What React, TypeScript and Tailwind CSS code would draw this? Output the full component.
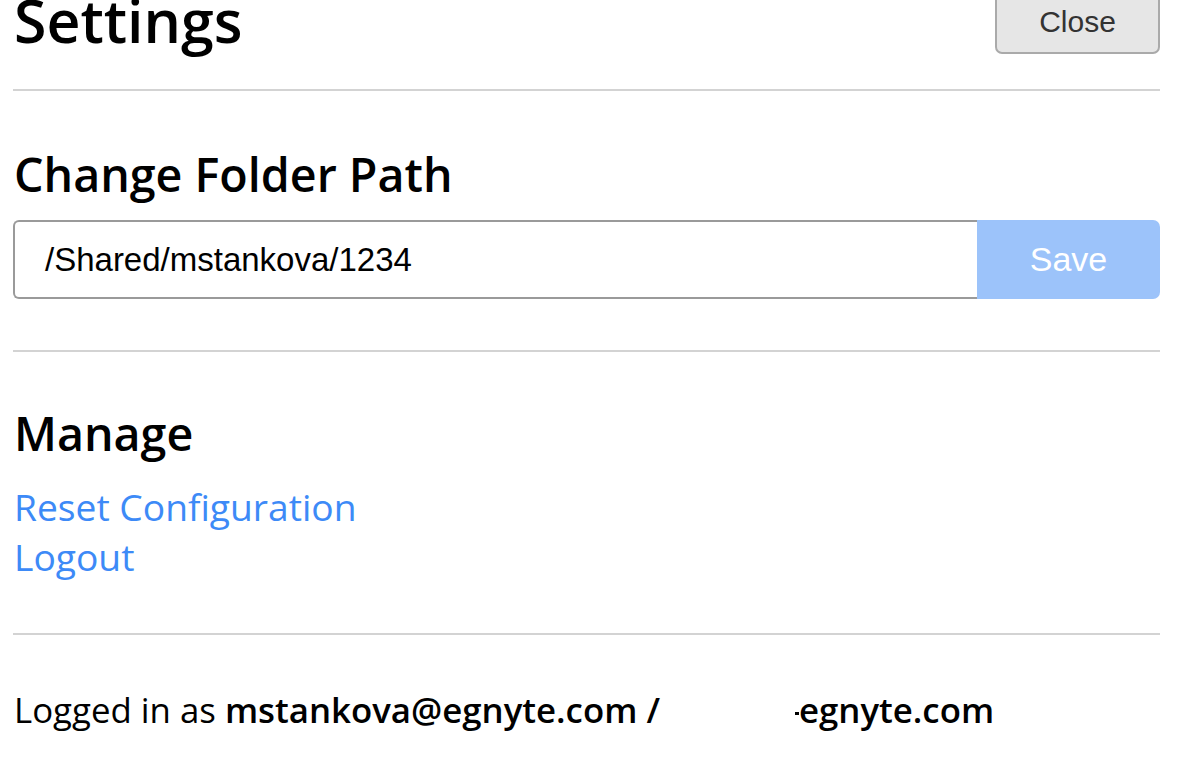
import React from "react";

export default function App() {
  const os = { fontFamily: '"Open Sans", "Noto Sans", sans-serif' };
  const ar = { fontFamily: '"Liberation Sans", Arial, sans-serif' };
  return (
    <div className="w-[1198px] h-[780px] overflow-hidden bg-white">
      <div className="ml-[13px] w-[1147px] mt-[-10px]">
        {/* Header */}
        <div className="flex justify-between items-start h-[101px] border-b-2 border-[#d3d3d3]">
          <h1
            className="text-[59px] leading-[59px] font-semibold text-black mt-[1px] ml-[1px]"
            style={os}
          >
            Settings
          </h1>
          <button
            className="w-[165px] h-[64px] bg-[#e6e6e6] border-2 border-[#aaaaaa] rounded-[7px] text-[30px] text-[#333333] pb-[2px]"
            style={ar}
          >
            Close
          </button>
        </div>

        {/* Change Folder Path */}
        <div className="border-b-2 border-[#d3d3d3] pb-[51px]">
          <h2
            className="text-[46.6px] leading-[56px] font-semibold text-black mt-[55px] ml-[1px]"
            style={os}
          >
            Change Folder Path
          </h2>
          <div className="flex mt-[18px] h-[79px]">
            <div
              className="flex-1 flex items-center border-2 border-r-0 border-[#9a9a9a] rounded-l-[6px] pl-[30px] text-[33px] text-black"
              style={ar}
            >
              /Shared/mstankova/1234
            </div>
            <button
              className="w-[183px] bg-[#9cc3fa] rounded-r-[7px] text-white text-[34px] pb-[1px]"
              style={ar}
            >
              Save
            </button>
          </div>
        </div>

        {/* Manage */}
        <div className="border-b-2 border-[#d3d3d3] pb-[51px]">
          <h2
            className="text-[46.6px] leading-[56px] font-semibold text-black mt-[53px] ml-[1px]"
            style={os}
          >
            Manage
          </h2>
          <div className="flex flex-col items-start mt-[21px] ml-[1px]" style={os}>
            <a className="text-[37.2px] leading-[50px] text-[#3d8af7] cursor-pointer">Reset Configuration</a>
            <a className="text-[37.2px] leading-[50px] text-[#3d8af7] cursor-pointer">Logout</a>
          </div>
        </div>

        {/* Footer */}
        <div className="mt-[52px] ml-[1px] text-[34.8px] leading-[46px] text-black flex items-baseline" style={os}>
          <span>Logged in as&nbsp;</span>
          <span className="font-semibold">mstankova@egnyte.com /</span>
          <span className="inline-block w-[135px]" />
          <span className="inline-block w-[4px] h-[3px] bg-black self-center mt-[6px]" />
          <span className="font-semibold">egnyte.com</span>
        </div>
      </div>
    </div>
  );
}
